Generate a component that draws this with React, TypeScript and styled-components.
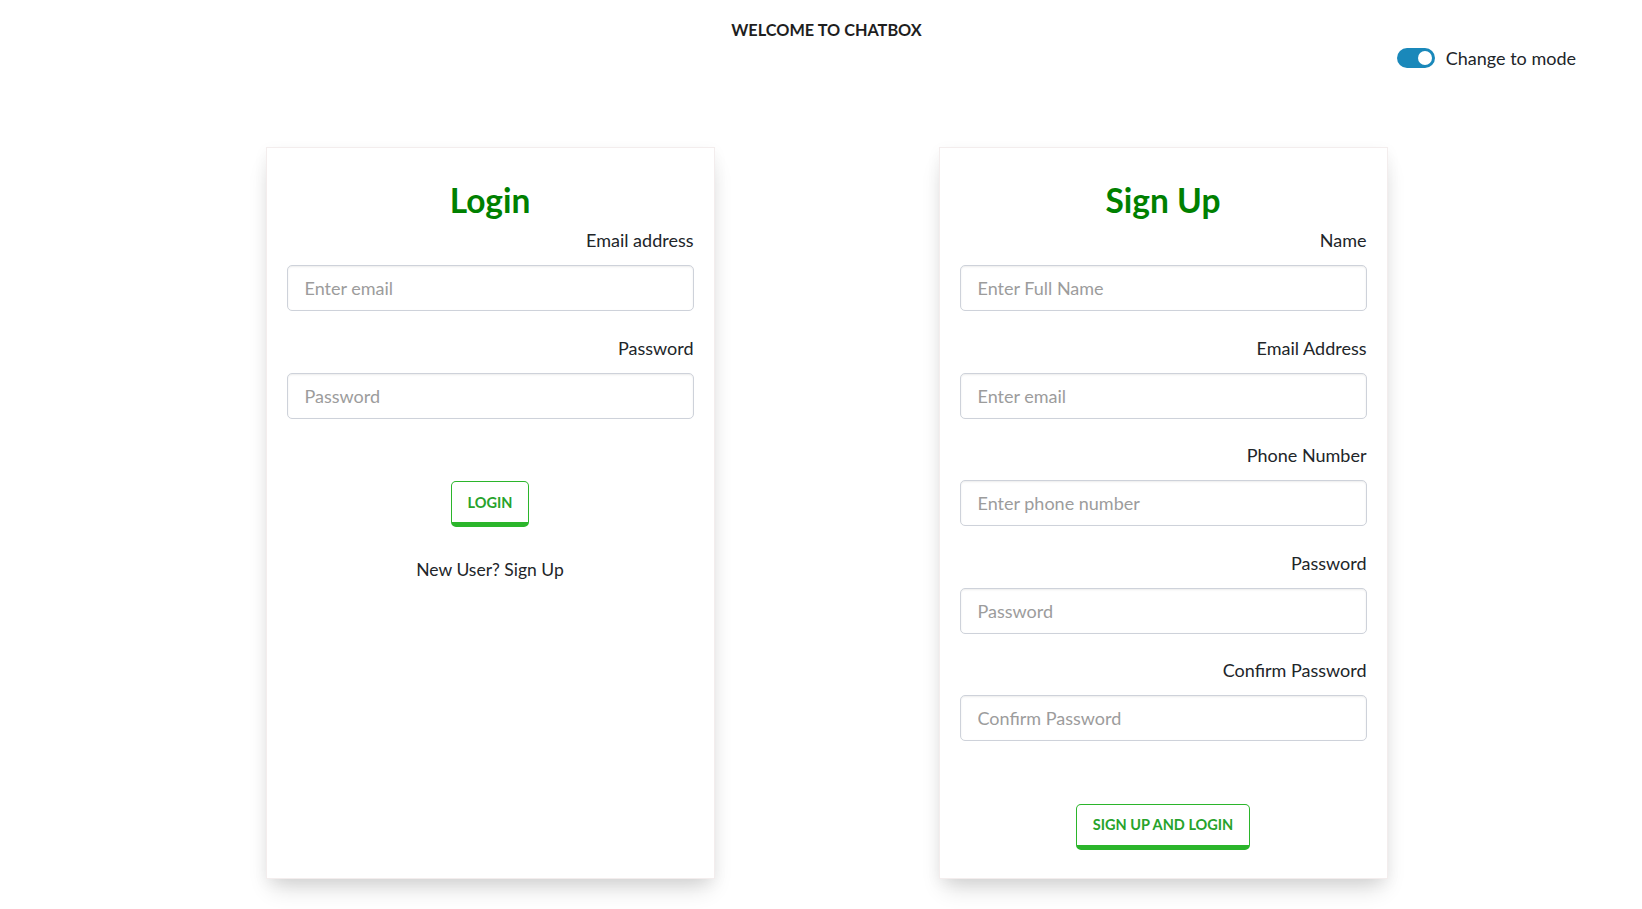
import React, { useState } from "react";
import styled, { createGlobalStyle } from "styled-components";

const GlobalStyle = createGlobalStyle`
  * { box-sizing: border-box; }
  html, body { margin: 0; padding: 0; background: #ffffff; }
  body {
    font-family: "Lato", "Noto Sans", "Liberation Sans", sans-serif;
    color: #212529;
  }
`;

const Page = styled.div`
  width: 1642px;
  min-height: 909px;
  padding-left: 11px;
  display: flex;
  flex-direction: column;
`;

const Title = styled.h1`
  margin: 19px 0 0;
  font-size: 16.3px;
  line-height: 22px;
  font-weight: 700;
  text-align: center;
  color: #1e1e1e;
`;

const ToggleRow = styled.div`
  display: flex;
  justify-content: flex-end;
  align-items: center;
  gap: 11px;
  height: 26px;
  margin-top: 4px;
  padding-right: 66px;
`;

const Switch = styled.button<{ $on: boolean }>`
  position: relative;
  width: 38px;
  height: 20px;
  border-radius: 10px;
  border: none;
  padding: 0;
  cursor: pointer;
  background: ${(p) => (p.$on ? "#1a88ba" : "#c8c8c8")};
  &::after {
    content: "";
    position: absolute;
    top: 3px;
    left: ${(p) => (p.$on ? "21px" : "3px")};
    width: 14px;
    height: 14px;
    border-radius: 50%;
    background: #ffffff;
  }
`;

const ToggleText = styled.span`
  font-size: 18px;
  line-height: 26px;
  color: #212529;
`;

const Cards = styled.div`
  display: flex;
  justify-content: center;
  align-items: stretch;
  gap: 224px;
  margin-top: 76px;
`;

const Card = styled.div`
  width: 449px;
  background: #ffffff;
  border: 1px solid #f3eded;
  box-shadow: 0 14px 22px -6px rgba(0, 0, 0, 0.16), 0 4px 14px rgba(0, 0, 0, 0.05);
  padding: 31px 20px 28px 20px;
  display: flex;
  flex-direction: column;
`;

const CardTitle = styled.h2`
  margin: 0 0 6px;
  font-size: 33.5px;
  line-height: 42px;
  font-weight: 700;
  text-align: center;
  color: #008000;
`;

const Field = styled.div`
  display: flex;
  flex-direction: column;
  margin-bottom: 23.5px;
`;

const Label = styled.label`
  align-self: flex-end;
  font-size: 18px;
  line-height: 26px;
  margin-bottom: 12px;
  color: #212529;
`;

const Input = styled.input`
  width: 100%;
  height: 46px;
  border: 1px solid #ced2da;
  border-radius: 5px;
  padding: 0 17px;
  font-family: inherit;
  font-size: 18px;
  color: #212529;
  background: #ffffff;
  box-shadow: inset 0 1px 2px rgba(0, 0, 0, 0.08);
  outline: none;
  &::placeholder {
    color: #9c9c9c;
  }
`;

const Actions = styled.div`
  display: flex;
  flex-direction: column;
  align-items: center;
  margin-top: 39px;
`;

const GreenButton = styled.button`
  height: 46px;
  padding: 0 16px;
  background: #ffffff;
  border: 1px solid #2bb52b;
  border-bottom: 5px solid #2bb52b;
  border-radius: 5px;
  font-family: inherit;
  font-size: 14.5px;
  font-weight: 700;
  letter-spacing: 0;
  text-transform: uppercase;
  color: #27a32b;
  cursor: pointer;
`;

const SwitchLink = styled.p`
  margin: 30px 0 0;
  font-size: 17.5px;
  line-height: 26px;
  text-align: center;
  color: #212529;
`;

type FieldDef = { label: string; placeholder: string; type: string };

const loginFields: FieldDef[] = [
  { label: "Email address", placeholder: "Enter email", type: "email" },
  { label: "Password", placeholder: "Password", type: "password" },
];

const signupFields: FieldDef[] = [
  { label: "Name", placeholder: "Enter Full Name", type: "text" },
  { label: "Email Address", placeholder: "Enter email", type: "email" },
  { label: "Phone Number", placeholder: "Enter phone number", type: "tel" },
  { label: "Password", placeholder: "Password", type: "password" },
  { label: "Confirm Password", placeholder: "Confirm Password", type: "password" },
];

const Fields = ({ items }: { items: FieldDef[] }) => (
  <>
    {items.map((f) => (
      <Field key={f.label}>
        <Label>{f.label}</Label>
        <Input type={f.type} placeholder={f.placeholder} />
      </Field>
    ))}
  </>
);

export default function App() {
  const [on, setOn] = useState(true);
  return (
    <>
      <GlobalStyle />
      <Page>
        <Title>WELCOME TO CHATBOX</Title>
        <ToggleRow>
          <Switch $on={on} onClick={() => setOn(!on)} aria-label="toggle mode" />
          <ToggleText>Change to mode</ToggleText>
        </ToggleRow>
        <Cards>
          <Card>
            <CardTitle>Login</CardTitle>
            <Fields items={loginFields} />
            <Actions>
              <GreenButton>Login</GreenButton>
              <SwitchLink>New User? Sign Up</SwitchLink>
            </Actions>
          </Card>
          <Card>
            <CardTitle>Sign Up</CardTitle>
            <Fields items={signupFields} />
            <Actions>
              <GreenButton>Sign Up and Login</GreenButton>
            </Actions>
          </Card>
        </Cards>
      </Page>
    </>
  );
}
